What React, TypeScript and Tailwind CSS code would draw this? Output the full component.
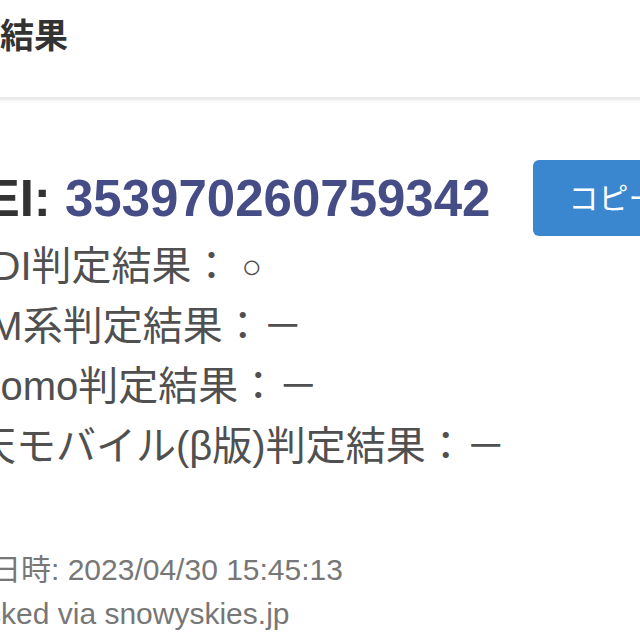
const font = "font-['Liberation_Sans','Noto_Sans_CJK_JP',sans-serif]";

type Row = { carrier: string; result: string };

const rows: Row[] = [
  { carrier: "KDDI", result: "○" },
  { carrier: "SBM系", result: "－" },
  { carrier: "docomo", result: "－" },
  { carrier: "楽天モバイル(β版)", result: "－" },
];

export default function App() {
  return (
    <div className={`${font} h-[640px] w-[640px] overflow-hidden bg-white`}>
      {/* Header */}
      <header className="h-[100px] border-b-[3px] border-[#ebebeb] shadow-[0_2px_3px_rgba(0,0,0,0.04)]">
        <h1 className="-ml-[68px] whitespace-nowrap pt-[14px] text-[34px] font-bold leading-[44px] text-[#333]">
          判定結果
        </h1>
      </header>

      <main className="-ml-[64px] pt-[60px]">
        {/* IMEI + copy */}
        <div className="flex items-center gap-[43px]">
          <p className="-ml-[7px] shrink-0 whitespace-nowrap text-[51px] font-bold leading-none text-[#333]">
            IMEI: <span className="text-[#464c86]">353970260759342</span>
          </p>
          <button className="h-[76px] shrink-0 whitespace-nowrap rounded-md bg-[#3b87cf] px-[35px] text-[30px] text-white">
            コピー
          </button>
        </div>

        {/* Results */}
        <ul className="text-[40px] leading-[60px] text-[#505050]">
          {rows.map((r) => (
            <li key={r.carrier} className="flex h-[60px] items-center whitespace-nowrap">
              {r.carrier}判定結果：
              {r.result === "○" ? <span className="ml-[10px] text-[34px] leading-none">○</span> : r.result}
            </li>
          ))}
        </ul>

        {/* Footer */}
        <div className="-ml-[5px] mt-[72px] text-[30px] leading-[44px] text-[#777]">
          <p className="whitespace-nowrap">確認日時: 2023/04/30 15:45:13</p>
          <p className="whitespace-nowrap">Checked via snowyskies.jp</p>
        </div>
      </main>
    </div>
  );
}
